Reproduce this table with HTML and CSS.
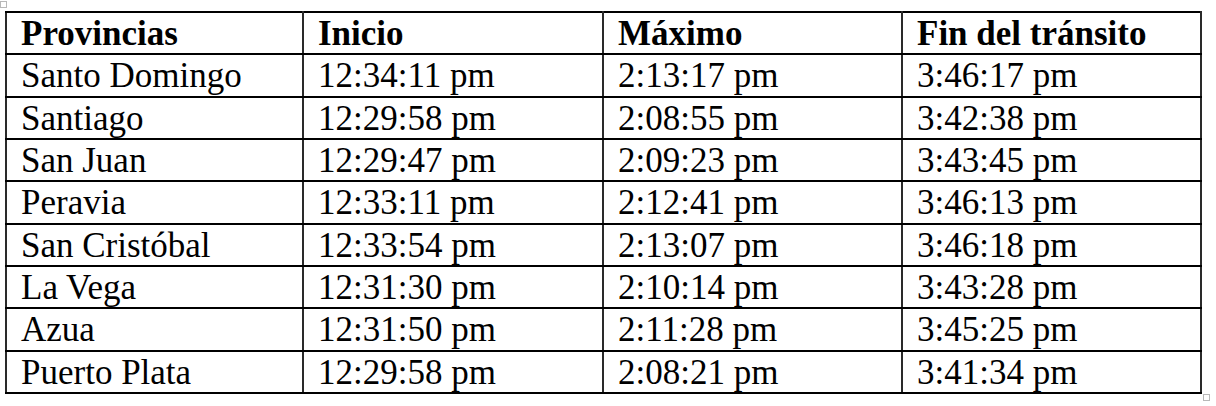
FILE: index.html
```html
<!DOCTYPE html>
<html lang="es">
<head>
<meta charset="utf-8">
<title>Tránsito</title>
<link rel="stylesheet" href="styles.css">
</head>
<body>
<div class="page">
  <span class="handle handle-move"></span>
  <table class="grid">
    <colgroup>
      <col class="c1"><col class="c2"><col class="c3"><col class="c4">
    </colgroup>
    <thead>
      <tr><th>Provincias</th><th>Inicio</th><th>Máximo</th><th>Fin del tránsito</th></tr>
    </thead>
    <tbody>
      <tr><td>Santo Domingo</td><td>12:34:11 pm</td><td>2:13:17 pm</td><td>3:46:17 pm</td></tr>
      <tr><td>Santiago</td><td>12:29:58 pm</td><td>2:08:55 pm</td><td>3:42:38 pm</td></tr>
      <tr><td>San Juan</td><td>12:29:47 pm</td><td>2:09:23 pm</td><td>3:43:45 pm</td></tr>
      <tr><td>Peravia</td><td>12:33:11 pm</td><td>2:12:41 pm</td><td>3:46:13 pm</td></tr>
      <tr><td>San Cristóbal</td><td>12:33:54 pm</td><td>2:13:07 pm</td><td>3:46:18 pm</td></tr>
      <tr><td>La Vega</td><td>12:31:30 pm</td><td>2:10:14 pm</td><td>3:43:28 pm</td></tr>
      <tr><td>Azua</td><td>12:31:50 pm</td><td>2:11:28 pm</td><td>3:45:25 pm</td></tr>
      <tr><td>Puerto Plata</td><td>12:29:58 pm</td><td>2:08:21 pm</td><td>3:41:34 pm</td></tr>
    </tbody>
  </table>
  <span class="handle handle-size"></span>
</div>
</body>
</html>
```
FILE: styles.css
```css
html, body {
  margin: 0;
  padding: 0;
  background: #fff;
}
.page {
  position: relative;
  width: 1216px;
  height: 406px;
  padding: 11px 0 0 5px;
  box-sizing: border-box;
}
.grid {
  border-collapse: collapse;
  table-layout: fixed;
  width: 1197px;
  font-family: "Liberation Serif", "Times New Roman", serif;
  font-size: 35px;
  color: #000;
}
.c1 { width: 297px; }
.c2 { width: 300px; }
.c3 { width: 299px; }
.c4 { width: 299px; }
.grid th,
.grid td {
  border-top: 2px solid #000;
  border-bottom: 2px solid #000;
  border-left: 2px solid #2a2a2a;
  border-right: 2px solid #2a2a2a;
  padding: 1px 0 0 14px;
  line-height: 39.33px;
  vertical-align: top;
  text-align: left;
  white-space: nowrap;
}
.grid th {
  font-weight: bold;
}
.handle {
  position: absolute;
  width: 5px;
  height: 5px;
  border: 1px solid #b8b8b8;
  background: #fff;
}
.handle-move {
  left: 0;
  top: 1px;
}
.handle-size {
  left: 1203px;
  top: 394px;
}
```
